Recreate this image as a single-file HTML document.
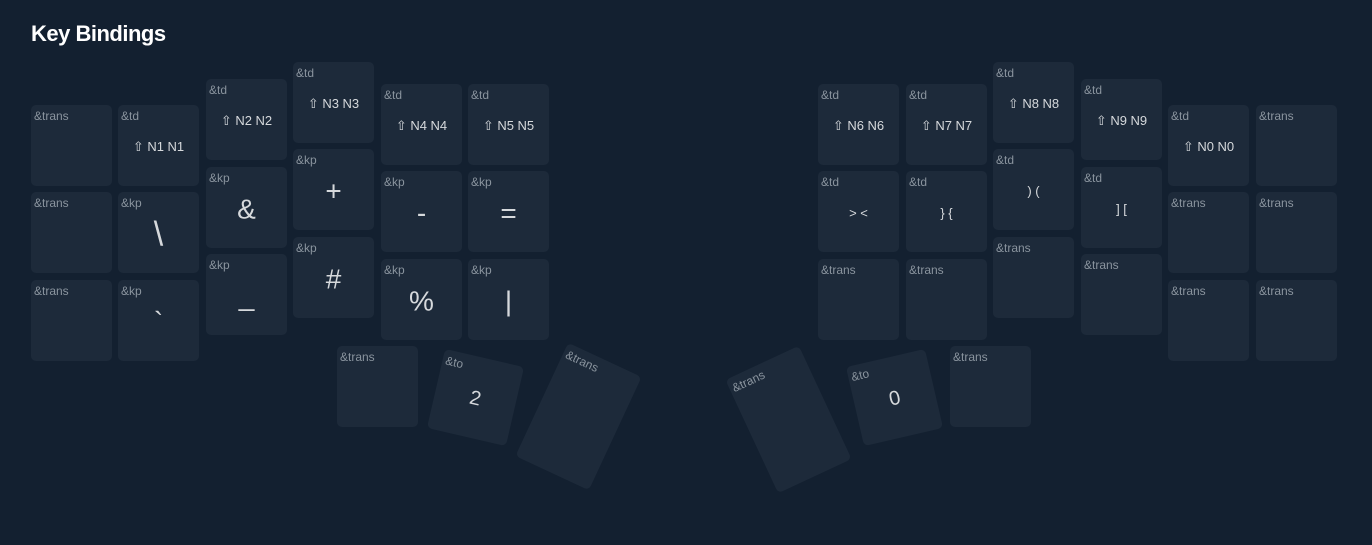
<!DOCTYPE html>
<html><head><meta charset="utf-8"><style>
body{margin:0;width:1372px;height:545px;background:#132030;font-family:"Liberation Sans",sans-serif;overflow:hidden;position:relative}
h1{position:absolute;left:31px;top:21px;margin:0;font-size:22px;font-weight:bold;color:#fff;letter-spacing:-0.5px}
.k{position:absolute;width:81px;height:81px;background:#1d2a3a;border-radius:5px;box-sizing:border-box}
.l{position:absolute;left:3px;top:4px;font-size:12px;color:#8a949e}
.c{position:absolute;left:0;right:0;top:50%;transform:translateY(-45%);text-align:center;color:#d6d9dc;font-size:13px}
.b{font-size:28px}
</style></head><body>
<h1>Key Bindings</h1>
<div class="k" style="left:31px;top:105px"><span class="l">&amp;trans</span></div>
<div class="k" style="left:31px;top:192px"><span class="l">&amp;trans</span></div>
<div class="k" style="left:31px;top:280px"><span class="l">&amp;trans</span></div>
<div class="k" style="left:118px;top:105px"><span class="l">&amp;td</span><div class="c">⇧ N1 N1</div></div>
<div class="k" style="left:118px;top:192px"><span class="l">&amp;kp</span><div class="c b" style="font-size:34px">\</div></div>
<div class="k" style="left:118px;top:280px"><span class="l">&amp;kp</span><div class="c b">`</div></div>
<div class="k" style="left:206px;top:79px"><span class="l">&amp;td</span><div class="c">⇧ N2 N2</div></div>
<div class="k" style="left:206px;top:167px"><span class="l">&amp;kp</span><div class="c b">&amp;</div></div>
<div class="k" style="left:206px;top:254px"><span class="l">&amp;kp</span><div class="c b">_</div></div>
<div class="k" style="left:293px;top:62px"><span class="l">&amp;td</span><div class="c">⇧ N3 N3</div></div>
<div class="k" style="left:293px;top:149px"><span class="l">&amp;kp</span><div class="c b">+</div></div>
<div class="k" style="left:293px;top:237px"><span class="l">&amp;kp</span><div class="c b">#</div></div>
<div class="k" style="left:381px;top:84px"><span class="l">&amp;td</span><div class="c">⇧ N4 N4</div></div>
<div class="k" style="left:381px;top:171px"><span class="l">&amp;kp</span><div class="c b">-</div></div>
<div class="k" style="left:381px;top:259px"><span class="l">&amp;kp</span><div class="c b">%</div></div>
<div class="k" style="left:468px;top:84px"><span class="l">&amp;td</span><div class="c">⇧ N5 N5</div></div>
<div class="k" style="left:468px;top:171px"><span class="l">&amp;kp</span><div class="c b">=</div></div>
<div class="k" style="left:468px;top:259px"><span class="l">&amp;kp</span><div class="c b">|</div></div>
<div class="k" style="left:818px;top:84px"><span class="l">&amp;td</span><div class="c">⇧ N6 N6</div></div>
<div class="k" style="left:818px;top:171px"><span class="l">&amp;td</span><div class="c">&gt; &lt;</div></div>
<div class="k" style="left:818px;top:259px"><span class="l">&amp;trans</span></div>
<div class="k" style="left:906px;top:84px"><span class="l">&amp;td</span><div class="c">⇧ N7 N7</div></div>
<div class="k" style="left:906px;top:171px"><span class="l">&amp;td</span><div class="c">} {</div></div>
<div class="k" style="left:906px;top:259px"><span class="l">&amp;trans</span></div>
<div class="k" style="left:993px;top:62px"><span class="l">&amp;td</span><div class="c">⇧ N8 N8</div></div>
<div class="k" style="left:993px;top:149px"><span class="l">&amp;td</span><div class="c">) (</div></div>
<div class="k" style="left:993px;top:237px"><span class="l">&amp;trans</span></div>
<div class="k" style="left:1081px;top:79px"><span class="l">&amp;td</span><div class="c">⇧ N9 N9</div></div>
<div class="k" style="left:1081px;top:167px"><span class="l">&amp;td</span><div class="c">] [</div></div>
<div class="k" style="left:1081px;top:254px"><span class="l">&amp;trans</span></div>
<div class="k" style="left:1168px;top:105px"><span class="l">&amp;td</span><div class="c">⇧ N0 N0</div></div>
<div class="k" style="left:1168px;top:192px"><span class="l">&amp;trans</span></div>
<div class="k" style="left:1168px;top:280px"><span class="l">&amp;trans</span></div>
<div class="k" style="left:1256px;top:105px"><span class="l">&amp;trans</span></div>
<div class="k" style="left:1256px;top:192px"><span class="l">&amp;trans</span></div>
<div class="k" style="left:1256px;top:280px"><span class="l">&amp;trans</span></div>
<div class="k" style="left:337px;top:346px"><span class="l">&amp;trans</span></div>
<div class="k" style="left:435px;top:357px;transform:rotate(13deg)"><span class="l">&amp;to</span><div class="c" style="font-size:20px">2</div></div>
<div class="k" style="left:538px;top:354px;height:125px;transform:rotate(25deg)"><span class="l">&amp;trans</span></div>
<div class="k" style="left:748px;top:357px;height:125px;transform:rotate(-25deg)"><span class="l">&amp;trans</span></div>
<div class="k" style="left:854px;top:357px;transform:rotate(-13deg)"><span class="l">&amp;to</span><div class="c" style="font-size:20px">0</div></div>
<div class="k" style="left:950px;top:346px"><span class="l">&amp;trans</span></div>
</body></html>
